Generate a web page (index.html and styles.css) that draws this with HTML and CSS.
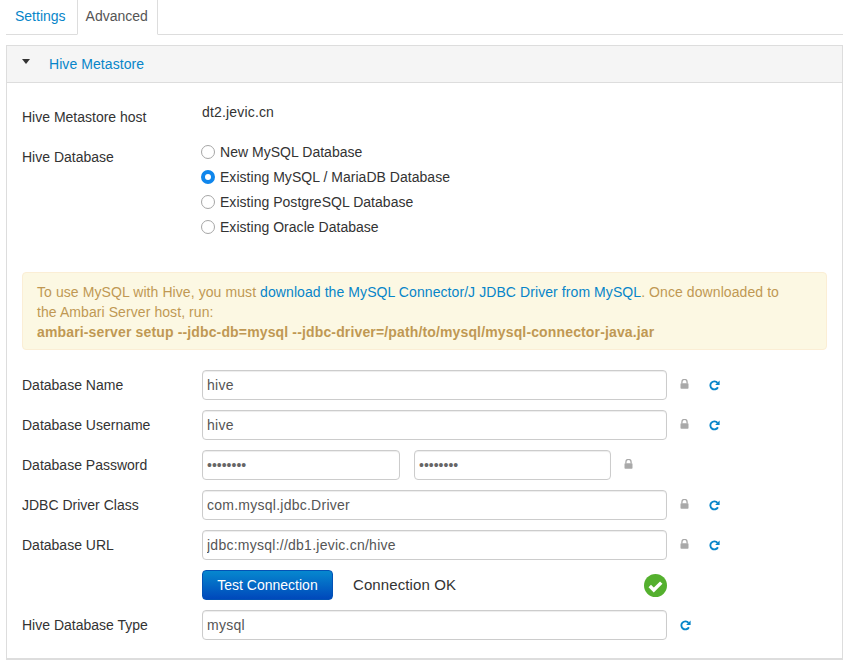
FILE: index.html
```html
<!DOCTYPE html>
<html lang="en">
<head>
<meta charset="utf-8">
<title>Hive Metastore</title>
<link rel="stylesheet" href="styles.css">
</head>
<body>
<svg class="defs" width="0" height="0" aria-hidden="true">
  <symbol id="lock" viewBox="0 0 9 10"><path d="M1.9 4.4V3a2.6 2.6 0 0 1 5.2 0v1.4" fill="none" stroke="currentColor" stroke-width="1.3"/><rect x="0.5" y="4.3" width="8" height="5.4" rx="0.7" fill="currentColor"/></symbol>
  <symbol id="undo" viewBox="0 0 11 11"><path d="M8.9 7.2A4 4 0 1 1 8.5 2.9" fill="none" stroke="currentColor" stroke-width="1.9"/><path d="M10.6 0.4V4.9H6.1Z" fill="currentColor"/></symbol>
</svg>
<ul class="tabs">
  <li class="tab"><a href="#">Settings</a></li>
  <li class="tab active"><a href="#">Advanced</a></li>
</ul>
<section class="panel">
  <header class="panel-head">
    <span class="caret"></span>
    <a href="#" class="panel-title">Hive Metastore</a>
  </header>
  <div class="panel-body">
    <div class="host-row">
      <div class="label">Hive Metastore host</div>
      <div class="host-value">dt2.jevic.cn</div>
    </div>
    <div class="db-row">
      <div class="label">Hive Database</div>
      <div class="radios">
        <div class="radio"><span class="dot"></span>New MySQL Database</div>
        <div class="radio"><span class="dot on"></span>Existing MySQL / MariaDB Database</div>
        <div class="radio"><span class="dot"></span>Existing PostgreSQL Database</div>
        <div class="radio"><span class="dot"></span>Existing Oracle Database</div>
      </div>
    </div>
    <div class="alert">To use MySQL with Hive, you must <a href="#">download the MySQL Connector/J JDBC Driver from MySQL</a>. Once downloaded to the Ambari Server host, run:<br><b>ambari-server setup --jdbc-db=mysql --jdbc-driver=/path/to/mysql/mysql-connector-java.jar</b></div>
    <div class="rows">
      <div class="row">
        <div class="label">Database Name</div>
        <input class="input wide" value="hive">
        <svg class="lock"><use href="#lock"/></svg>
        <svg class="undo"><use href="#undo"/></svg>
      </div>
      <div class="row">
        <div class="label">Database Username</div>
        <input class="input wide" value="hive">
        <svg class="lock"><use href="#lock"/></svg>
        <svg class="undo"><use href="#undo"/></svg>
      </div>
      <div class="row">
        <div class="label">Database Password</div>
        <input class="input half" type="password" value="aaaaaaaa">
        <input class="input half second" type="password" value="aaaaaaaa">
        <svg class="lock"><use href="#lock"/></svg>
      </div>
      <div class="row">
        <div class="label">JDBC Driver Class</div>
        <input class="input wide" value="com.mysql.jdbc.Driver">
        <svg class="lock"><use href="#lock"/></svg>
        <svg class="undo"><use href="#undo"/></svg>
      </div>
      <div class="row">
        <div class="label">Database URL</div>
        <input class="input wide" value="jdbc:mysql://db1.jevic.cn/hive">
        <svg class="lock"><use href="#lock"/></svg>
        <svg class="undo"><use href="#undo"/></svg>
      </div>
      <div class="row test-row">
        <div class="label"></div>
        <button class="btn" type="button">Test Connection</button>
        <span class="status">Connection OK</span>
        <svg class="ok" viewBox="0 0 24 24"><circle cx="12" cy="12" r="12" fill="#54b02e"/><path d="M6 12.5l4.2 4.2L18 9" fill="none" stroke="#fff" stroke-width="3.6"/></svg>
      </div>
      <div class="row">
        <div class="label">Hive Database Type</div>
        <input class="input wide" value="mysql">
        <svg class="undo solo"><use href="#undo"/></svg>
      </div>
    </div>
  </div>
</section>
</body>
</html>
```
FILE: styles.css
```css
* { box-sizing: border-box; }
html, body { margin: 0; height: 661px; overflow: hidden; }
body {
  background: #fff;
  color: #333;
  font: 14px/20px "Liberation Sans", Arial, sans-serif;
  padding: 0 4px 0 6px;
}
a { color: #0785c9; text-decoration: none; }
.defs { position: absolute; }

.tabs {
  display: flex;
  list-style: none;
  margin: 0 0 10px;
  padding: 0 0 0 1px;
  height: 35px;
  border-bottom: 1px solid #ddd;
}
.tab { height: 35px; }
.tab a { display: block; padding: 6px 8px 0; height: 35px; margin-right: 3px; }
.tab.active a {
  color: #555;
  background: #fff;
  border: 1px solid #ddd;
  border-top: 0;
  border-bottom-color: #fff;
  padding: 6px 8px 0;
  width: 81px;
  margin-right: 0;
}

.panel {
  height: 615px;
  border: 1px solid #ddd;
  border-bottom-width: 2px;
}
.panel-head {
  display: flex;
  align-items: center;
  height: 37px;
  background: #f5f5f5;
  border-bottom: 1px solid #ddd;
  padding: 0 0 0 15px;
}
.caret {
  width: 0;
  height: 0;
  border: 4.5px solid transparent;
  border-top: 5px solid #333;
  border-bottom: 0;
  margin: -5px 19px 0 0;
}
.panel-title { letter-spacing: .07px; }
.panel-body { padding: 0 15px; }

.label { width: 180px; flex: none; }
.host-row { display: flex; padding-top: 24px; height: 64px; }
.host-value { margin-top: -5px; letter-spacing: .17px; }

.db-row { display: flex; height: 125px; }
.radios { margin-top: -8px; letter-spacing: .03px; }
.radio { display: flex; align-items: center; height: 25px; }
.dot {
  width: 14px;
  height: 14px;
  border-radius: 50%;
  border: 1px solid #a6a6a6;
  background: #fff;
  margin: 0 5px 0 -1px;
  flex: none;
}
.dot.on { background: #0f86ec; border: 4px solid #0f86ec; position: relative; }
.dot.on::after {
  content: "";
  position: absolute;
  inset: 0;
  border-radius: 50%;
  background: #fff;
}

.alert {
  height: 78px;
  margin-bottom: 20px;
  padding: 9px 35px 9px 14px;
  background: #fcf8e3;
  border: 1px solid #fbeed5;
  border-radius: 4px;
  color: #c09853;
  letter-spacing: .08px;
}
.alert b { letter-spacing: .145px; }

.row { display: flex; align-items: center; height: 30px; margin-bottom: 10px; }
.input {
  height: 30px;
  padding: 0 4px;
  border: 1px solid #ccc;
  border-radius: 4px;
  color: #555;
  font: 14px "Liberation Sans", Arial, sans-serif;
  letter-spacing: .25px;
  box-shadow: inset 0 1px 1px rgba(0,0,0,.075);
  background: #fff;
}
.input[type="password"] { letter-spacing: 0; color: #666; }
.wide { width: 465px; }
.half { width: 198px; }
.half.second { margin-left: 14px; width: 197px; }
.lock { width: 9px; height: 10px; margin: 0 0 2px 13px; color: #a9a9a9; flex: none; }
.undo { width: 11px; height: 11px; margin-left: 20px; color: #0785c9; flex: none; }
.undo.solo { margin-left: 13px; }

.btn {
  width: 131px;
  height: 30px;
  padding: 0;
  border: 1px solid #0352b5;
  border-radius: 4px;
  background: linear-gradient(#0688cf, #0048bb);
  color: #fff;
  font: 14px "Liberation Sans", Arial, sans-serif;
}
.status { margin-left: 20px; width: 291px; flex: none; color: #333; font-size: 15px; letter-spacing: .1px; }
.ok { width: 23px; height: 23px; flex: none; }
```
